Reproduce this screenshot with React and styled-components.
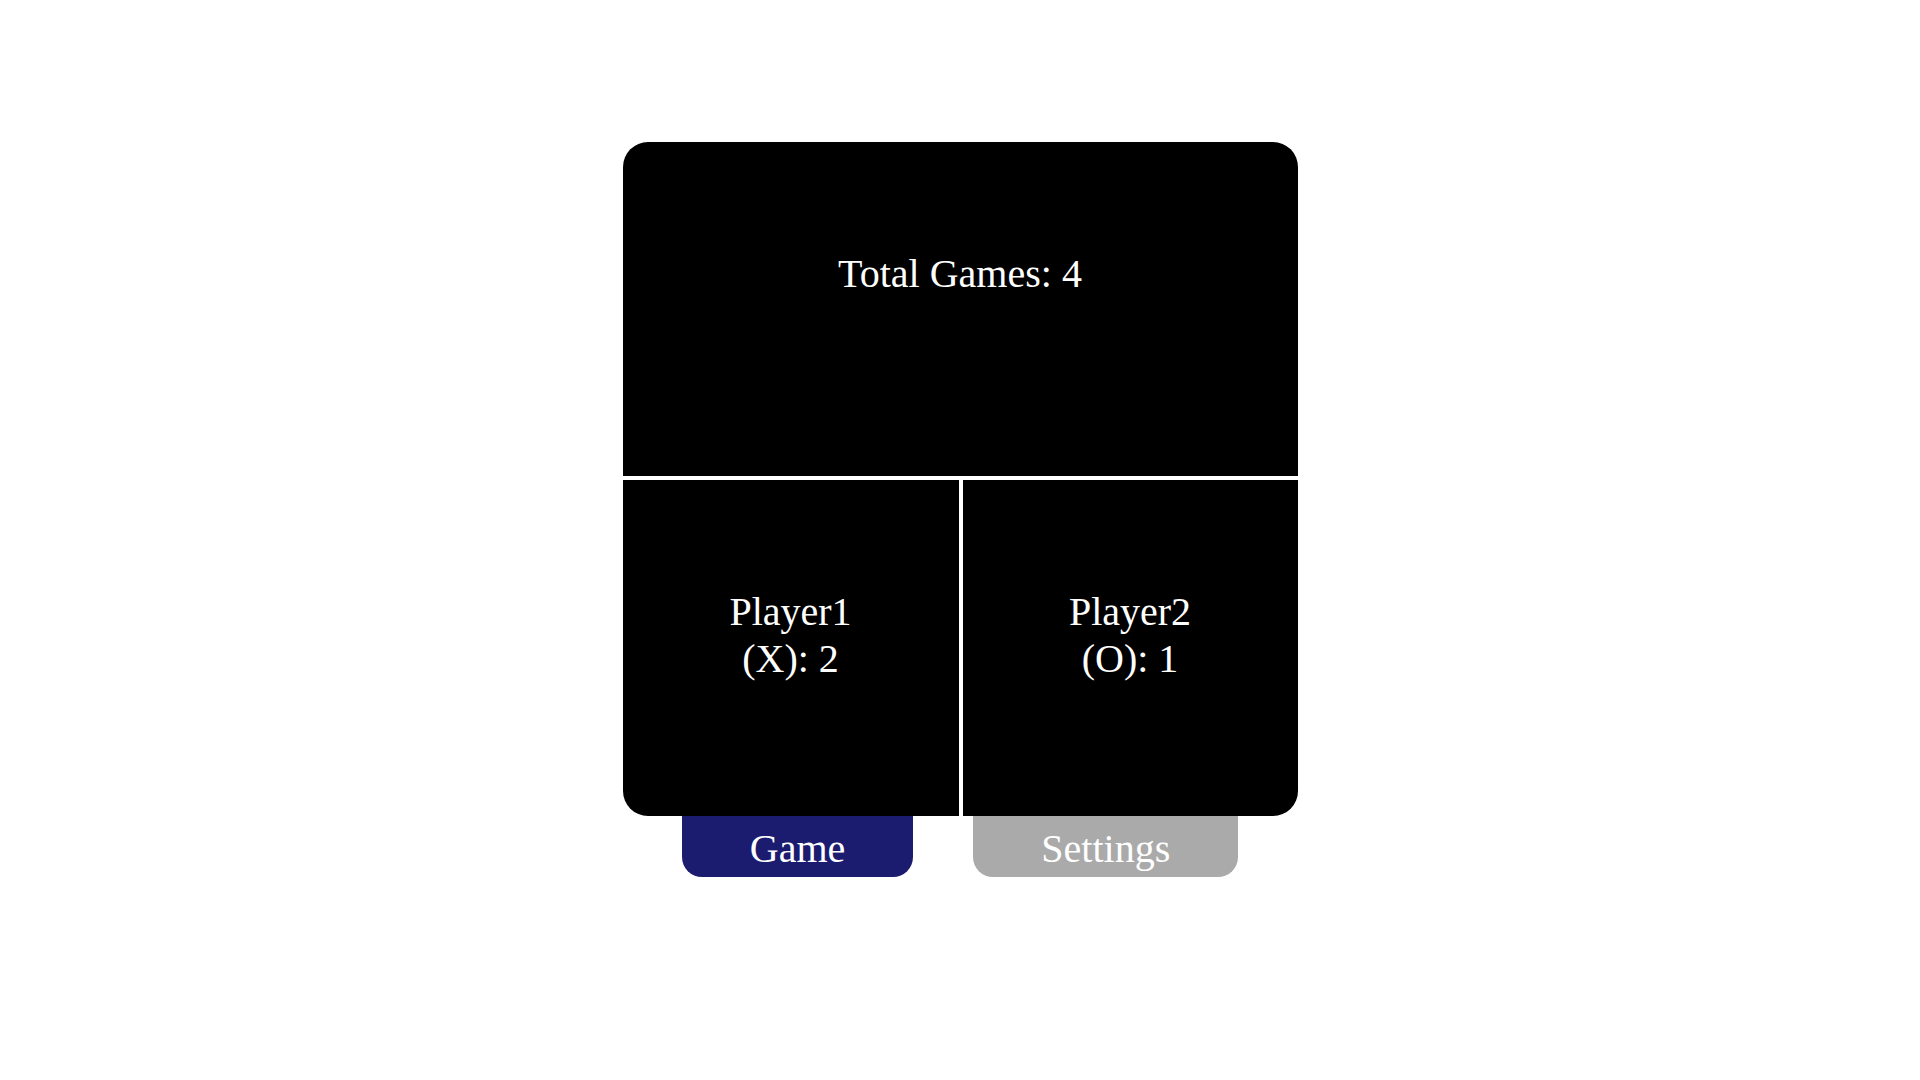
import React from "react";
import styled, { createGlobalStyle } from "styled-components";

const Global = createGlobalStyle`
  html, body { margin: 0; padding: 0; background: #ffffff; }
  body { font-family: "Liberation Serif", "Times New Roman", serif; }
`;

const Page = styled.div`
  display: flex;
  flex-direction: column;
  align-items: center;
  padding-top: 142px;
  width: 1920px;
  min-height: 1080px;
  box-sizing: border-box;
`;

const Board = styled.div`
  display: grid;
  grid-template-columns: 336px 335px;
  grid-template-rows: 334px 336px;
  gap: 4px;
  width: 675px;
  border-radius: 25px;
  overflow: hidden;
`;

const Cell = styled.div`
  background: #000000;
  color: #ffffff;
  font-size: 40px;
  line-height: normal;
  text-align: center;
  padding-top: 108px;
  box-sizing: border-box;
  grid-column: ${(p) => (p.$wide ? "1 / span 2" : "auto")};
`;

const Tabs = styled.div`
  display: flex;
  gap: 60px;
`;

const Tab = styled.button`
  border: none;
  margin: 0;
  height: 61px;
  padding: 4px 68px 0;
  border-radius: 0 0 20px 20px;
  background: ${(p) => (p.$active ? "#1b1b70" : "#aaaaaa")};
  color: #ffffff;
  font-family: "Liberation Serif", "Times New Roman", serif;
  font-size: 40px;
  line-height: normal;
  cursor: pointer;
`;

export default function App() {
  return (
    <>
      <Global />
      <Page>
        <Board>
          <Cell $wide>Total Games: 4</Cell>
          <Cell>
            Player1
            <br />
            (X): 2
          </Cell>
          <Cell>
            Player2
            <br />
            (O): 1
          </Cell>
        </Board>
        <Tabs>
          <Tab $active>Game</Tab>
          <Tab>Settings</Tab>
        </Tabs>
      </Page>
    </>
  );
}
